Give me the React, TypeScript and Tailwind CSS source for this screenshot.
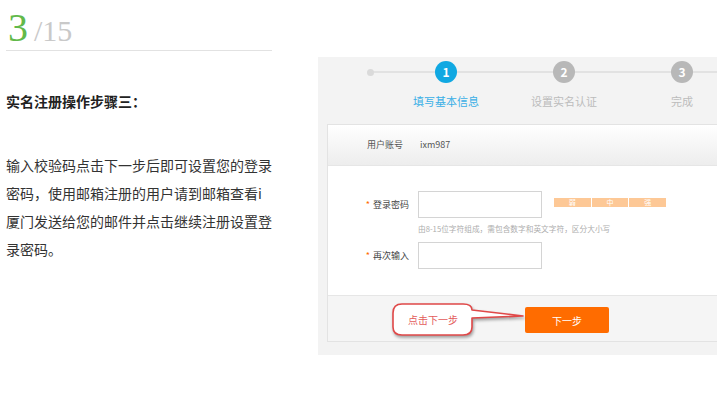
import React from 'react';

const cjk = { fontFamily: '"Noto Sans CJK SC", "Noto Sans", sans-serif' };

const steps = [
  { n: 1, label: '填写基本信息', active: true },
  { n: 2, label: '设置实名认证', active: false },
  { n: 3, label: '完成', active: false },
];

const CalloutBubble: React.FC = () => (
  <div className="absolute left-[64px] top-[7px] w-[136px] h-[36px]">
    <svg width="136" height="36" viewBox="0 0 136 36" className="drop-shadow-[1px_2px_1.5px_rgba(0,0,0,0.35)]">
      <path
        d="M10,1 H71 Q80,1 80,7 L131,13 L80,15 V24 Q80,32 71,32 H10 Q1,32 1,24 V10 Q1,1 10,1 Z"
        fill="#ffffff"
        stroke="#e04848"
        strokeWidth="1.6"
        strokeLinejoin="round"
      />
    </svg>
    <span className="absolute left-0 top-0 w-[82px] h-[33px] flex items-center justify-center text-[10px] text-[#e35b5b]">
      点击下一步
    </span>
  </div>
);

const App: React.FC = () => {
  return (
    <div className="w-[717px] h-[399px] overflow-hidden bg-white flex items-start" style={cjk}>
      {/* 左侧说明 */}
      <div className="ml-[6px] w-[266px] shrink-0">
        <div className="h-[51px] border-b border-[#e2e2e2] pt-[8px] pl-[2px] flex items-baseline leading-none" style={{ fontFamily: '"Liberation Serif", serif' }}>
          <span className="text-[40px] text-[#62b94a]">3</span>
          <span className="ml-[6px] text-[30px] text-[#c9c9c9]">/15</span>
        </div>
        <h3 className="mt-[40px] text-[14px] leading-[20px] font-bold text-[#222]">实名注册操作步骤三：</h3>
        <p className="mt-[40px] text-[14px] leading-[28px] text-[#333]">
          输入校验码点击下一步后即可设置您的登录<br />
          密码，使用邮箱注册的用户请到邮箱查看i<br />
          厦门发送给您的邮件并点击继续注册设置登<br />
          录密码。
        </p>
      </div>

      {/* 右侧截图面板 */}
      <div className="ml-[46px] mt-[57px] w-[430px] shrink-0 bg-[#f3f3f3] pb-[13px]">
        <div className="relative h-[67px]">
          <div className="absolute left-[52px] right-0 top-[14px] h-[2px] bg-[#e2e2e2]" />
          <div className="absolute left-[49px] top-[12px] w-[7px] h-[7px] rounded-full bg-[#dadada]" />
          <div className="relative flex pl-[69px] pt-[4px]">
            {steps.map((s) => (
              <div key={s.n} className="w-[118px] flex flex-col items-center">
                <div
                  className={
                    s.active
                      ? 'w-[22px] h-[22px] rounded-full bg-[#10a8e2] text-white text-[12px] font-bold flex items-center justify-center'
                      : 'w-[22px] h-[22px] rounded-full bg-[#b8b8b8] text-white text-[12px] font-bold flex items-center justify-center'
                  }
                >
                  {s.n}
                </div>
                <div className={s.active ? 'mt-[10px] text-[11px] leading-[16px] text-[#3aafe6]' : 'mt-[10px] text-[11px] leading-[16px] text-[#bcbcbc]'}>
                  {s.label}
                </div>
              </div>
            ))}
          </div>
        </div>

        <div className="ml-[9px] border border-[#e3e3e3] bg-white">
          <div className="h-[41px] flex items-center pl-[39px] border-b border-[#e6e6e6] bg-gradient-to-b from-white to-[#ededed] text-[9px] text-[#555]">
            <span>用户账号</span>
            <span className="ml-[17px]">ixm987</span>
          </div>

          <div className="pt-[25px] pb-[26px]">
            <div className="flex items-start">
              <div className="w-[90px] pr-[9px] h-[27px] flex items-center justify-end text-[9px] text-[#444]">
                <span className="text-[#ff6a00] mr-[3px]">*</span>登录密码
              </div>
              <div className="w-[124px] h-[27px] border border-[#d4d4d4] bg-white" />
              <div className="ml-[12px] mt-[7px] flex gap-px w-[112px] h-[9px] text-[7px] leading-[9px] text-white">
                <div className="flex-1 bg-[#fdc896] text-center">弱</div>
                <div className="flex-1 bg-[#fdc896] text-center">中</div>
                <div className="flex-1 bg-[#fdc896] text-center">强</div>
              </div>
            </div>
            <div className="ml-[90px] mt-[6px] text-[7.7px] leading-[10px] text-[#adadad] whitespace-nowrap">
              由8-15位字符组成，需包含数字和英文字符，区分大小写
            </div>
            <div className="flex items-start mt-[8px]">
              <div className="w-[90px] pr-[9px] h-[27px] flex items-center justify-end text-[9px] text-[#444]">
                <span className="text-[#ff6a00] mr-[3px]">*</span>再次输入
              </div>
              <div className="w-[124px] h-[27px] border border-[#d4d4d4] bg-white" />
            </div>
          </div>

          <div className="relative h-[46px] border-t border-[#e6e6e6] bg-[#f5f5f5] pl-[197px] pt-[11px]">
            <CalloutBubble />
            <button className="w-[84px] h-[26px] rounded-[2px] bg-[#ff6c00] text-white text-[10px] flex items-center justify-center">
              下一步
            </button>
          </div>
        </div>
      </div>
    </div>
  );
};

export default App;
